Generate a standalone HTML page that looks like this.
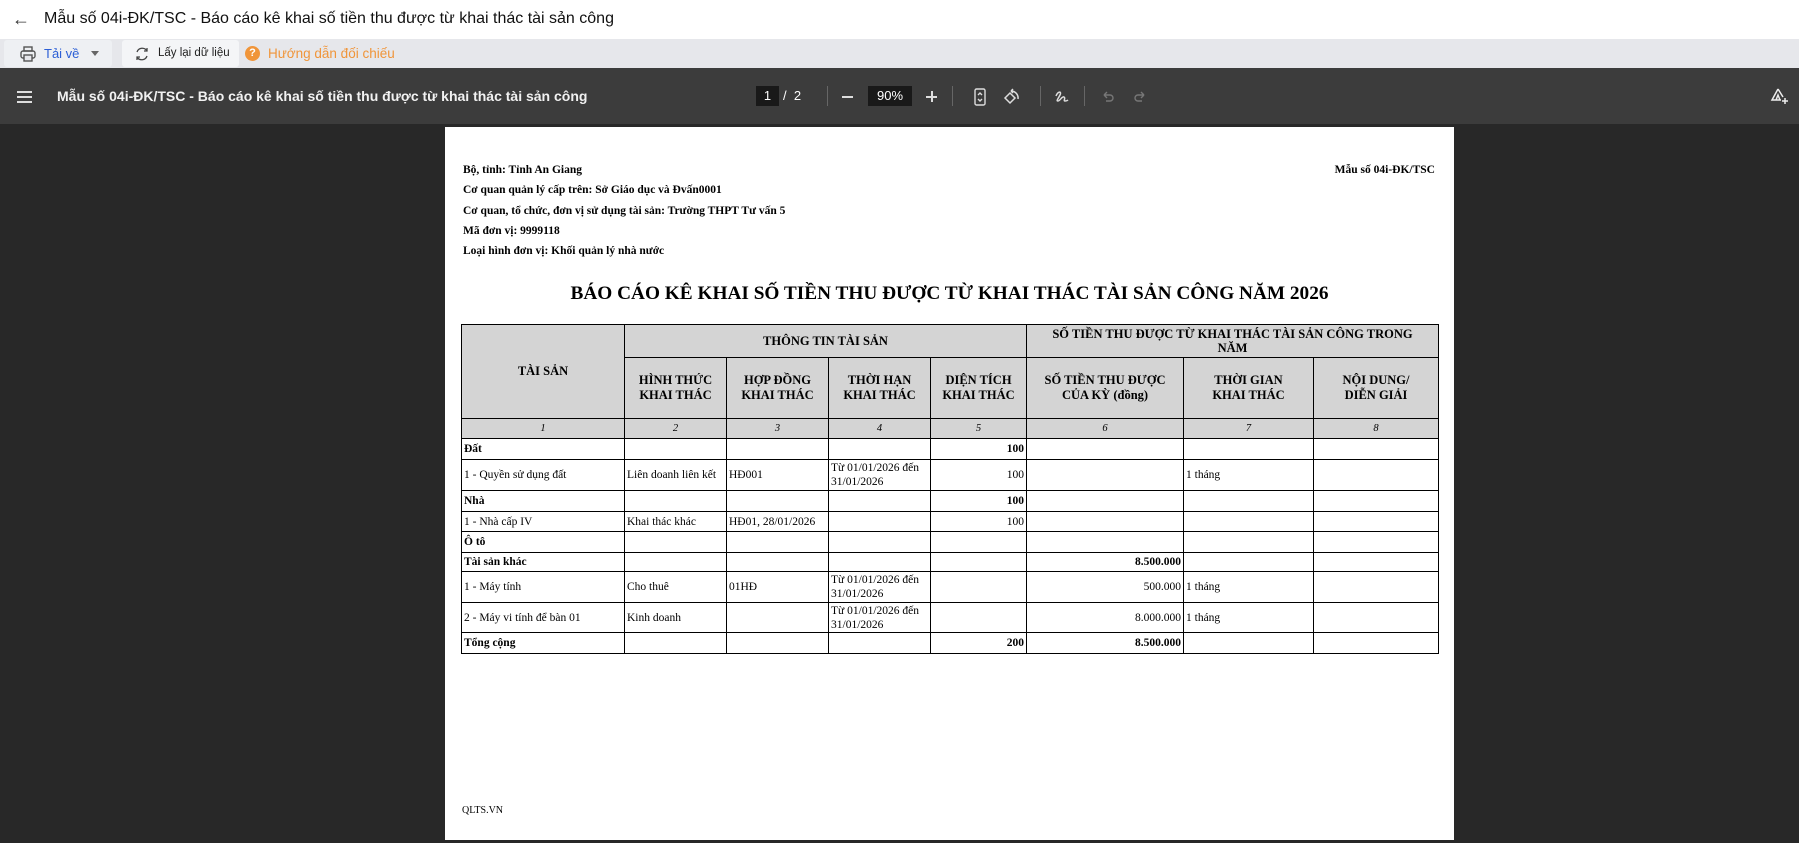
<!DOCTYPE html>
<html><head><meta charset="utf-8"><style>
*{margin:0;padding:0;box-sizing:border-box}
body{width:1799px;height:843px;overflow:hidden;background:#282828;font-family:"Liberation Sans",sans-serif;position:relative}
.abs{position:absolute}
#top{left:0;top:0;width:1799px;height:39px;background:#fff}
#bar{left:0;top:39px;width:1799px;height:29px;background:#e6e7eb}
#pdfbar{left:0;top:68px;width:1799px;height:56px;background:#3c3c3c;color:#fff}
#page{left:445px;top:127px;width:1009px;height:713px;background:#fff;font-family:"Liberation Serif",serif;color:#000}
.hl{position:absolute;left:18px;font-size:11.5px;font-weight:bold}
table{position:absolute;left:16px;top:197px;border-collapse:collapse;table-layout:fixed;font-size:11.5px}
td{border:1px solid #000;padding:0 2px;vertical-align:middle;overflow:hidden}
.h td,td.h{background:#d4d4d4;font-weight:bold;text-align:center;line-height:15px;font-size:12.5px}
.n td{background:#d4d4d4;font-style:italic;text-align:center;font-size:10.5px}
.b{font-weight:bold}.r{text-align:right}
.sm{line-height:14px}
</style></head><body>
<div id="top" class="abs">
<div class="abs" style="left:12px;top:9px;font-size:18px;color:#333">&#8592;</div>
<div class="abs" style="left:44px;top:10px;font-size:16px;color:#111">Mẫu số 04i-ĐK/TSC - Báo cáo kê khai số tiền thu được từ khai thác tài sản công</div>
</div>
<div id="bar" class="abs">
<div class="abs" style="left:4px;top:1px;width:108px;height:27px;background:#eef0f3;border-radius:3px"></div>
<svg class="abs" style="left:19px;top:6px" width="18" height="18" viewBox="0 0 18 18" fill="none" stroke="#555" stroke-width="1.4"><rect x="5" y="2" width="8" height="4"/><rect x="2" y="6" width="14" height="7" rx="2"/><rect x="5" y="10" width="8" height="6" fill="#e6e7eb"/></svg>
<div class="abs" style="left:44px;top:7px;font-size:13px;color:#2c5fd6">Tải về</div>
<div class="abs" style="left:91px;top:12px;border:4px solid transparent;border-top:5px solid #666"></div>
<div class="abs" style="left:122px;top:1px;width:117px;height:27px;background:#f4f5f7;border-radius:3px"></div>
<svg class="abs" style="left:134px;top:7px" width="16" height="16" viewBox="0 0 16 16" fill="none" stroke="#444" stroke-width="1.3"><path d="M3 6a5.5 5.5 0 0 1 10-1M13 10a5.5 5.5 0 0 1-10 1"/><path d="M13 2v3h-3M3 14v-3h3"/></svg>
<div class="abs" style="left:158px;top:8px;font-size:11.5px;color:#222">Lấy lại dữ liệu</div>
<div class="abs" style="left:245px;top:7px;width:15px;height:15px;border-radius:50%;background:#f0953a;color:#fff;font-size:11px;font-weight:bold;text-align:center;line-height:15px">?</div>
<div class="abs" style="left:268px;top:7px;font-size:13.5px;color:#f0953a">Hướng dẫn đối chiếu</div>
</div>
<div id="pdfbar" class="abs">
<div class="abs" style="left:17px;top:23px;width:15px;height:2px;background:#ddd;box-shadow:0 5px 0 #ddd,0 10px 0 #ddd"></div>
<div class="abs" style="left:57px;top:20px;font-size:14px;font-weight:bold;color:#f1f1f1">Mẫu số 04i-ĐK/TSC - Báo cáo kê khai số tiền thu được từ khai thác tài sản công</div>
<div class="abs" style="left:756px;top:18px;width:23px;height:20px;background:#191919;text-align:center;font-size:13px;line-height:20px">1</div>
<div class="abs" style="left:783px;top:20px;font-size:13px">/&nbsp; 2</div>
<div class="abs" style="left:827px;top:18px;width:1px;height:20px;background:#666"></div>
<div class="abs" style="left:842px;top:28px;width:11px;height:2px;background:#ddd"></div>
<div class="abs" style="left:868px;top:18px;width:44px;height:20px;background:#191919;text-align:center;font-size:13px;line-height:20px">90%</div>
<div class="abs" style="left:926px;top:28px;width:11px;height:2px;background:#ddd"></div>
<div class="abs" style="left:931px;top:23px;width:2px;height:11px;background:#ddd"></div>
<div class="abs" style="left:952px;top:18px;width:1px;height:20px;background:#666"></div>
<svg class="abs" style="left:973px;top:20px" width="14" height="18" viewBox="0 0 14 18" fill="none" stroke="#ddd" stroke-width="1.4"><rect x="2" y="1" width="10" height="16" rx="1.5"/><path d="M5 7l2-2 2 2M5 11l2 2 2-2"/></svg>
<svg class="abs" style="left:1002px;top:19px" width="20" height="20" viewBox="0 0 20 20" fill="none" stroke="#ddd" stroke-width="1.5"><path d="M3 11l5-5 5 5-5 5z"/><path d="M9 4a7 7 0 0 1 7 8M9 4l2-2M9 4l2 2"/></svg>
<div class="abs" style="left:1040px;top:18px;width:1px;height:20px;background:#666"></div>
<svg class="abs" style="left:1053px;top:20px" width="18" height="18" viewBox="0 0 18 18" fill="none" stroke="#ddd" stroke-width="1.5"><path d="M3 8c2-5 6-5 4-1s-4 6-2 6 4-5 6-4-1 4 1 4 3-1 3-1"/></svg>
<div class="abs" style="left:1084px;top:18px;width:1px;height:20px;background:#666"></div>
<svg class="abs" style="left:1100px;top:21px" width="16" height="16" viewBox="0 0 16 16" fill="none" stroke="#777" stroke-width="1.4"><path d="M4 6h6a3 3 0 0 1 0 6H6M4 6l3-3M4 6l3 3"/></svg>
<svg class="abs" style="left:1132px;top:21px" width="16" height="16" viewBox="0 0 16 16" fill="none" stroke="#777" stroke-width="1.4"><path d="M12 6H6a3 3 0 0 0 0 6h4M12 6L9 3M12 6L9 9"/></svg>
<svg class="abs" style="left:1770px;top:18px" width="20" height="20" viewBox="0 0 20 20" fill="none" stroke="#eee" stroke-width="1.5"><path d="M8 3L2 14h9M8 3l5 8"/><path d="M6 14l2-5 2 5"/><path d="M15 12v6M12 15h6"/></svg>
</div>
<div id="page" class="abs">
<div class="hl" style="top:37px">Bộ, tỉnh: Tỉnh An Giang</div>
<div class="hl" style="top:57px">Cơ quan quản lý cấp trên: Sở Giáo dục và Đvấn0001</div>
<div class="hl" style="top:78px">Cơ quan, tổ chức, đơn vị sử dụng tài sản: Trường THPT Tư vấn 5</div>
<div class="hl" style="top:98px">Mã đơn vị: 9999118</div>
<div class="hl" style="top:118px">Loại hình đơn vị: Khối quản lý nhà nước</div>
<div class="hl" style="left:auto;right:19px;top:37px">Mẫu số 04i-ĐK/TSC</div>
<div class="abs" style="left:0;width:1009px;top:156px;text-align:center;font-size:19.3px;font-weight:bold">BÁO CÁO KÊ KHAI SỐ TIỀN THU ĐƯỢC TỪ KHAI THÁC TÀI SẢN CÔNG NĂM 2026</div>
<table>
<colgroup><col style="width:163px"><col style="width:102px"><col style="width:102px"><col style="width:102px"><col style="width:96px"><col style="width:157px"><col style="width:130px"><col style="width:125px"></colgroup>
<tr class="h" style="height:33px"><td rowspan="2">TÀI SẢN</td><td colspan="4">THÔNG TIN TÀI SẢN</td><td colspan="3" style="line-height:14px;padding:0 12px">SỐ TIỀN THU ĐƯỢC TỪ KHAI THÁC TÀI SẢN CÔNG TRONG NĂM</td></tr>
<tr class="h" style="height:61px"><td>HÌNH THỨC<br>KHAI THÁC</td><td>HỢP ĐỒNG<br>KHAI THÁC</td><td>THỜI HẠN<br>KHAI THÁC</td><td>DIỆN TÍCH<br>KHAI THÁC</td><td>SỐ TIỀN THU ĐƯỢC<br>CỦA KỲ (đồng)</td><td>THỜI GIAN<br>KHAI THÁC</td><td>NỘI DUNG/<br>DIỄN GIẢI</td></tr>
<tr class="n" style="height:20px"><td>1</td><td>2</td><td>3</td><td>4</td><td>5</td><td>6</td><td>7</td><td>8</td></tr>
<tr style="height:21px"><td class="b">Đất</td><td></td><td></td><td></td><td class="r b">100</td><td></td><td></td><td></td></tr>
<tr style="height:31px"><td>1 - Quyền sử dụng đất</td><td>Liên doanh liên kết</td><td>HĐ001</td><td class="sm">Từ 01/01/2026 đến 31/01/2026</td><td class="r">100</td><td></td><td>1 tháng</td><td></td></tr>
<tr style="height:21px"><td class="b">Nhà</td><td></td><td></td><td></td><td class="r b">100</td><td></td><td></td><td></td></tr>
<tr style="height:20px"><td>1 - Nhà cấp IV</td><td>Khai thác khác</td><td>HĐ01, 28/01/2026</td><td></td><td class="r">100</td><td></td><td></td><td></td></tr>
<tr style="height:21px"><td class="b">Ô tô</td><td></td><td></td><td></td><td></td><td></td><td></td><td></td></tr>
<tr style="height:19px"><td class="b">Tài sản khác</td><td></td><td></td><td></td><td></td><td class="r b">8.500.000</td><td></td><td></td></tr>
<tr style="height:31px"><td>1 - Máy tính</td><td>Cho thuê</td><td>01HĐ</td><td class="sm">Từ 01/01/2026 đến 31/01/2026</td><td></td><td class="r">500.000</td><td>1 tháng</td><td></td></tr>
<tr style="height:30px"><td>2 - Máy vi tính để bàn 01</td><td>Kinh doanh</td><td></td><td class="sm">Từ 01/01/2026 đến 31/01/2026</td><td></td><td class="r">8.000.000</td><td>1 tháng</td><td></td></tr>
<tr style="height:21px"><td class="b">Tổng cộng</td><td></td><td></td><td></td><td class="r b">200</td><td class="r b">8.500.000</td><td></td><td></td></tr>
</table>
<div class="abs" style="left:17px;top:678px;font-size:10px">QLTS.VN</div>
</div>
</body></html>
